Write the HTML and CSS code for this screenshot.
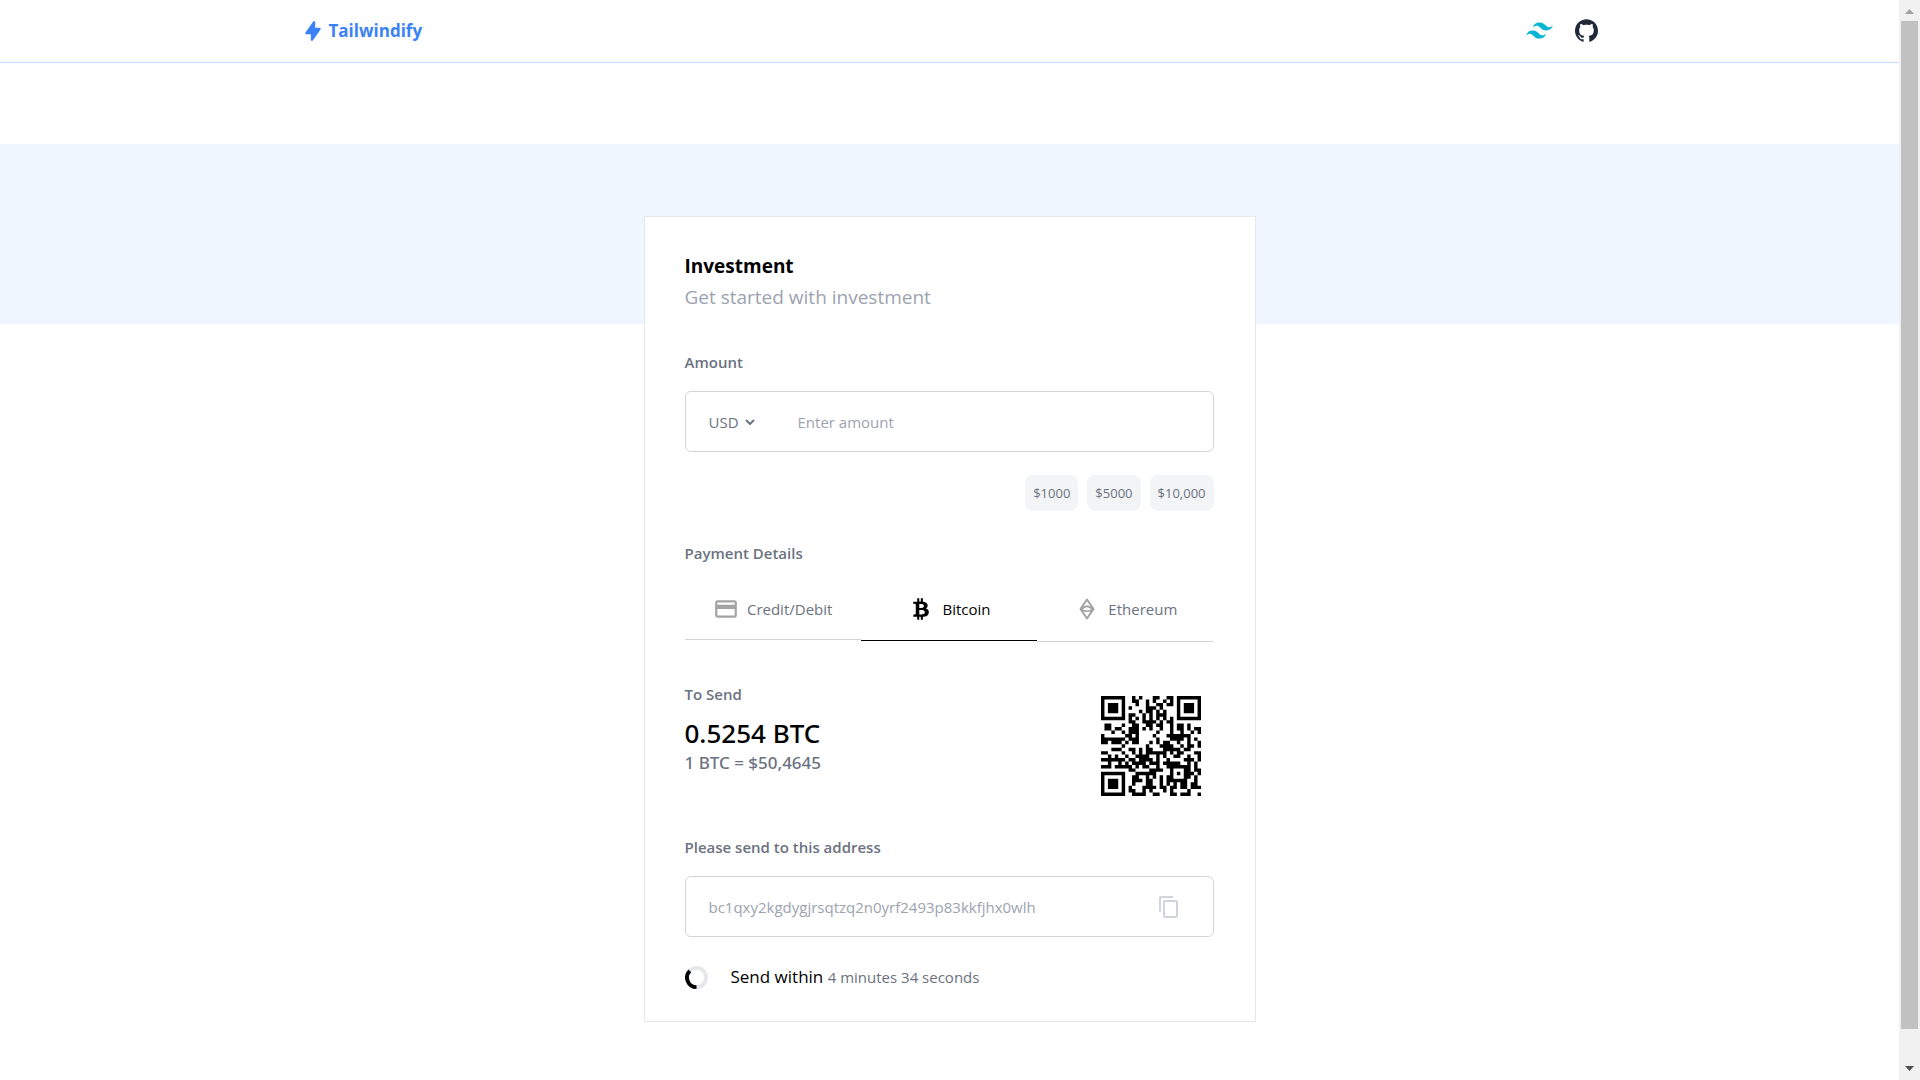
FILE: index.html
```html
<!DOCTYPE html>
<html lang="en">
<head>
<meta charset="utf-8">
<title>Tailwindify</title>
<link rel="stylesheet" href="styles.css">
</head>
<body>
<div class="page">
  <header class="header">
    <nav class="nav">
      <a class="brand" href="#">
        <svg class="brand-icon" viewBox="0 0 20 20" aria-hidden="true"><path fill="currentColor" fill-rule="evenodd" d="M11.3 1.046A1 1 0 0112 2v5h4a1 1 0 01.82 1.573l-7 10A1 1 0 018 18v-5H4a1 1 0 01-.82-1.573l7-10a1 1 0 011.12-.38z"/></svg>
        <span>Tailwindify</span>
      </a>
      <div class="nav-links">
        <a class="tailwind" href="#" aria-label="Tailwind CSS"><svg viewBox="0 0 24 24"><path fill="currentColor" d="M12.001,4.8c-3.2,0-5.2,1.6-6,4.8c1.2-1.6,2.6-2.2,4.2-1.8c0.913,0.228,1.565,0.89,2.288,1.624C13.666,10.618,15.027,12,18.001,12c3.2,0,5.2-1.6,6-4.8c-1.2,1.6-2.6,2.2-4.2,1.8c-0.913-0.228-1.565-0.89-2.288-1.624C16.337,6.182,14.976,4.8,12.001,4.8z M6.001,12c-3.2,0-5.2,1.6-6,4.8c1.2-1.6,2.6-2.2,4.2-1.8c0.913,0.228,1.565,0.89,2.288,1.624c1.177,1.194,2.538,2.576,5.512,2.576c3.2,0,5.2-1.6,6-4.8c-1.2,1.6-2.6,2.2-4.2,1.8c-0.913-0.228-1.565-0.89-2.288-1.624C10.337,13.382,8.976,12,6.001,12z"/></svg></a>
        <a class="github" href="#" aria-label="GitHub"><svg viewBox="0 0 24 24"><path fill="currentColor" d="M12 .297c-6.63 0-12 5.373-12 12 0 5.303 3.438 9.8 8.205 11.385.6.113.82-.258.82-.577 0-.285-.01-1.04-.015-2.04-3.338.724-4.042-1.61-4.042-1.61C4.422 18.07 3.633 17.7 3.633 17.7c-1.087-.744.084-.729.084-.729 1.205.084 1.838 1.236 1.838 1.236 1.07 1.835 2.809 1.305 3.495.998.108-.776.417-1.305.76-1.605-2.665-.3-5.466-1.332-5.466-5.93 0-1.31.465-2.38 1.235-3.22-.135-.303-.54-1.523.105-3.176 0 0 1.005-.322 3.3 1.23.96-.267 1.98-.399 3-.405 1.02.006 2.04.138 3 .405 2.28-1.552 3.285-1.23 3.285-1.23.645 1.653.24 2.873.12 3.176.765.84 1.23 1.91 1.23 3.22 0 4.61-2.805 5.625-5.475 5.92.42.36.81 1.096.81 2.22 0 1.606-.015 2.896-.015 3.286 0 .315.21.69.825.57C20.565 22.092 24 17.592 24 12.297c0-6.627-5.373-12-12-12"/></svg></a>
      </div>
    </nav>
  </header>

  <main>
    <div class="band"></div>
    <form class="card">
      <h1 class="title">Investment</h1>
      <p class="subtitle">Get started with investment</p>

      <label class="label label-amount" for="amount">Amount</label>
      <div class="field">
        <span class="currency">
          <select aria-label="Currency"><option>USD</option><option>EUR</option></select>
          <svg class="chevron" viewBox="0 0 10 6" aria-hidden="true"><path d="M1 1l4 4 4-4" fill="none" stroke="currentColor" stroke-width="2"/></svg>
        </span>
        <input id="amount" type="text" placeholder="Enter amount">
      </div>
      <div class="presets">
        <button type="button">$1000</button>
        <button type="button">$5000</button>
        <button type="button">$10,000</button>
      </div>

      <h2 class="label label-payment">Payment Details</h2>
      <div class="tabs">
        <button type="button" class="tab">
          <svg class="tab-icon-wide" viewBox="0 0 24 24" aria-hidden="true"><path fill="currentColor" d="M20 4H4c-1.110 0-1.990.89-1.990 2L2 18c0 1.110.89 2 2 2h16c1.110 0 2-.89 2-2V6c0-1.110-.89-2-2-2zm0 14H4v-6h16v6zm0-10H4V6h16v2z"/></svg>
          <span>Credit/Debit</span>
        </button>
        <button type="button" class="tab tab-active">
          <svg class="tab-icon" viewBox="0 0 384 512" aria-hidden="true"><path fill="currentColor" d="M310.204 242.638c27.73-14.18 45.377-39.39 41.28-81.3-5.358-57.351-52.458-76.573-114.85-81.929V0h-48.528v77.203c-12.605 0-25.525.315-38.444.63V0h-48.53v79.409c-17.842.539-38.622.276-97.37 0v51.678c38.314-.678 58.417-3.14 63.023 21.427v217.429c-2.925 19.492-18.524 16.685-53.255 16.071L3.765 443.68c88.481 0 97.37.315 97.37.315V512h48.53v-67.06c13.234.315 26.154.315 38.444.315V512h48.528v-68.005c81.299-4.412 135.647-24.894 142.895-101.467 5.671-61.446-23.32-88.862-69.326-99.89zM150.608 134.553c27.415 0 113.126-8.507 113.126 48.528 0 54.515-85.71 48.212-113.126 48.212v-96.74zm0 251.776V279.821c32.772 0 133.127-9.138 133.127 53.255-.001 60.186-100.355 53.253-133.127 53.253z"/></svg>
          <span>Bitcoin</span>
        </button>
        <button type="button" class="tab tab-last">
          <svg class="tab-icon" viewBox="0 0 16 22" aria-hidden="true"><g fill="none" stroke="currentColor" stroke-width="2" stroke-linejoin="round"><path d="M8 1.500L14.500 11 8 20.500 1.500 11z"/><path d="M2 11.500Q8 5 14 11.500"/><path stroke-width="1.500" d="M2 11.500Q8 15 14 11.500"/></g></svg>
          <span>Ethereum</span>
        </button>
      </div>

      <section class="quote">
        <div>
          <h2 class="label">To Send</h2>
          <p class="amount">0.5254 BTC</p>
          <p class="rate">1 BTC = $50,4645</p>
        </div>
        <svg class="qr" id="qr" viewBox="0 0 29 29" role="img" aria-label="Payment QR code"></svg>
      </section>

      <label class="label label-address" for="address">Please send to this address</label>
      <div class="field">
        <input id="address" type="text" readonly value="bc1qxy2kgdygjrsqtzq2n0yrf2493p83kkfjhx0wlh">
        <button class="copy" type="button" aria-label="Copy address"><svg viewBox="0 0 24 24"><path fill="currentColor" d="M16 1H4c-1.100 0-2 .9-2 2v14h2V3h12V1zm3 4H8c-1.100 0-2 .9-2 2v14c0 1.100.9 2 2 2h11c1.100 0 2-.9 2-2V7c0-1.100-.9-2-2-2zm0 16H8V7h11v14z"/></svg></button>
      </div>

      <p class="timer">
        <svg class="spinner" viewBox="0 0 24 24" aria-hidden="true"><g fill="none" stroke-width="4"><circle cx="12" cy="12" r="10" stroke="#e5e7eb"/><path d="M12 22A10 10 0 0 1 5 5" stroke="#000"/></g></svg>
        <span>Send within <span class="remaining">4 minutes 34 seconds</span></span>
      </p>
    </form>
  </main>
</div>
<div class="scrollbar" aria-hidden="true">
  <svg viewBox="0 0 9 5"><path fill="#a3a3a3" d="M0 5l4.500-5L9 5z"/></svg>
  <div class="thumb"></div>
  <svg viewBox="0 0 9 5"><path fill="#505050" d="M0 0l4.500 5L9 0z"/></svg>
</div>
<script src="qr.js"></script>
</body>
</html>
```
FILE: styles.css
```css
* { box-sizing: border-box; }
body {
  margin: 0;
  min-height: 100vh;
  display: flex;
  background: #fff;
  color: #000;
  font-family: "Open Sans", "Noto Sans", sans-serif;
  font-size: 15px;
  line-height: 24px;
}
h1, h2, p { margin: 0; }
button, input, select {
  margin: 0;
  padding: 0;
  border: 0;
  background: none;
  color: inherit;
  font: inherit;
}
svg { display: block; flex: none; }
a { color: inherit; text-decoration: none; }

.page { flex: 1; }

.header { border-bottom: 1px solid #bfdbfe; }
.nav {
  max-width: 1296px;
  height: 62px;
  margin: 0 auto;
  display: flex;
  align-items: center;
  justify-content: space-between;
}
.brand {
  display: flex;
  align-items: center;
  gap: 5px;
  color: #3b82f6;
  font-size: 17px;
  font-weight: 700;
}
.brand-icon { width: 22px; height: 22px; }
.nav-links { padding-bottom: 2px; display: flex; align-items: center; gap: 22px; }
.tailwind { color: #06b6d4; }
.tailwind svg { width: 27px; height: 27px; }
.github { color: #1f2937; }
.github svg { width: 23px; height: 23px; }

.band { height: 180px; margin-top: 81px; background: #eff6ff; }
.card {
  position: relative;
  max-width: 612px;
  margin: -108px auto 58px;
  padding: 35px 41px 32px 40px;
  border: 1px solid #e5e7eb;
  background: #fff;
}
.title { margin-bottom: 1px; font-size: 19px; line-height: 28px; font-weight: 700; }
.subtitle { font-size: 19px; line-height: 32px; color: #9ca3af; }

.label {
  display: block;
  color: #6b7280;
  font-size: 15px;
  line-height: 24px;
  font-weight: 600;
}
.label-amount { margin-top: 37px; }
.label-payment { margin-top: 30px; }
.label-address { margin-top: 39px; }

.field {
  height: 61px;
  margin-top: 17px;
  padding: 0 23px;
  display: flex;
  align-items: center;
  border: 1px solid #d1d5db;
  border-radius: 6px;
  color: #9ca3af;
}
.field input { flex: 1; min-width: 0; height: 100%; outline: 0; }
.field input::placeholder { color: #9ca3af; opacity: 1; }
.currency {
  width: 89px;
  display: flex;
  align-items: center;
  gap: 4px;
  color: #6b7280;
}
.currency select { width: 32px; appearance: none; }
.chevron { width: 10px; height: 6px; }
.copy { padding: 0 9px; color: #d1d5db; }
.copy svg { width: 24px; height: 24px; }

.presets {
  margin-top: 23px;
  display: flex;
  justify-content: flex-end;
  gap: 9px;
}
.presets button {
  height: 36px;
  padding: 0 8px;
  border-radius: 8px;
  background: #f3f4f6;
  color: #6b7280;
  font-size: 13px;
}

.tabs {
  margin-top: 14px;
  display: grid;
  grid-template-columns: repeat(3, 1fr);
  align-items: start;
}
.tab {
  height: 61px;
  display: flex;
  align-items: center;
  justify-content: center;
  gap: 8px;
  border-bottom: 1px solid #d1d5db;
  color: #6b7280;
}
.tab svg { color: #a3a3a3; }
.tab-icon-wide { width: 26px; height: 26px; }
.tab-icon { width: 16px; height: 22px; margin: 0 5px 0 6px; }
.tab-active { height: 62px; padding-bottom: 1px; border-color: #000; color: #000; }
.tab-active svg { color: #000; }
.tab-last { height: 63px; padding-bottom: 2px; }

.quote {
  margin-top: 40px;
  padding-right: 13px;
  display: flex;
  justify-content: space-between;
}
.amount, .rate { font-family: "Noto Sans", "Open Sans", sans-serif; font-weight: 500; }
.amount { margin-top: 9px; font-size: 26px; line-height: 36px; }
.rate { color: #6b7280; font-size: 17px; line-height: 24px; }
.qr { width: 100px; height: 100px; margin-top: 14px; }

.timer {
  margin-top: 28px;
  display: flex;
  align-items: center;
  gap: 23px;
  font-size: 17px;
}
.spinner { width: 23px; height: 23px; }
.remaining { color: #6b7280; font-size: 15px; }

.scrollbar {
  position: sticky;
  top: 0;
  width: 21px;
  height: 100vh;
  padding: 9px 2px;
  display: flex;
  flex-direction: column;
  align-items: center;
  gap: 7px;
  background: #f1f1f1;
}
.scrollbar svg { width: 9px; height: 5px; }
.thumb { flex: 1; width: 100%; margin-bottom: 30px; background: #c1c1c1; }
```
FILE: qr.js
```js
// Version 3, level Q, mask 1 QR code: two interleaved blocks of 17 data + 18 check bytes.
(function () {
  var text = 'http://en.m.wikipedia.org', size = 29;
  var bits = '0100' + byteBits(text.length);
  for (var c of text) bits += byteBits(c.charCodeAt(0));
  bits += '0000';
  var data = bits.match(/.{8}/g).map(function (b) { return parseInt(b, 2); });
  for (var pad = 0xEC; data.length < 34; pad ^= 0xFD) data.push(pad);

  function byteBits(n) { return n.toString(2).padStart(8, '0'); }
  function mul(a, b) {
    var r = 0;
    for (; b; b >>= 1) {
      if (b & 1) r ^= a;
      a <<= 1;
      if (a & 256) a ^= 0x11D;
    }
    return r;
  }
  var gen = [1], root = 1;
  for (var i = 0; i < 18; i++) {
    var next = gen.concat(0);
    gen.forEach(function (g, k) { next[k + 1] ^= mul(g, root); });
    gen = next;
    root = mul(root, 2);
  }
  function check(block) {
    var rem = block.concat(new Array(18).fill(0));
    for (var i = 0; i < block.length; i++) {
      var f = rem[i];
      for (var k = 0; k < gen.length; k++) rem[i + k] ^= mul(gen[k], f);
    }
    return rem.slice(block.length);
  }
  var a = data.slice(0, 17), b = data.slice(17), ea = check(a), eb = check(b), stream = '';
  a.forEach(function (v, i) { stream += byteBits(v) + byteBits(b[i]); });
  ea.forEach(function (v, i) { stream += byteBits(v) + byteBits(eb[i]); });

  var m = Array.from({ length: size }, function () { return new Array(size).fill(null); });
  function square(r, c, reach, dark) {
    for (var y = -reach; y <= reach; y++) for (var x = -reach; x <= reach; x++) {
      if (m[r + y] && m[r + y][c + x] !== undefined) m[r + y][c + x] = dark(Math.max(Math.abs(x), Math.abs(y)));
    }
  }
  [[3, 3], [3, 25], [25, 3]].forEach(function (p) {
    square(p[0], p[1], 4, function (d) { return d !== 2 && d !== 4; });
  });
  square(22, 22, 2, function (d) { return d !== 1; });
  for (i = 8; i < 21; i++) m[6][i] = m[i][6] = i % 2 === 0;
  m[21][8] = true;
  var format = '011000001101000';
  for (i = 0; i < 15; i++) {
    var on = format[i] === '1';
    if (i < 8) m[8][i < 6 ? i : i + 1] = on;
    else m[i === 8 ? 7 : 14 - i][8] = on;
    if (i < 7) m[28 - i][8] = on;
    else m[8][14 + i] = on;
  }

  var n = 0, up = true;
  for (var col = 28; col > 0; col -= 2) {
    if (col === 6) col = 5;
    for (var s = 0; s < size; s++) {
      var row = up ? 28 - s : s;
      for (var k = 0; k < 2; k++) {
        if (m[row][col - k] === null) {
          m[row][col - k] = (stream[n++] === '1') !== (row % 2 === 0);
        }
      }
    }
    up = !up;
  }

  var d = '';
  m.forEach(function (line, y) {
    line.forEach(function (dark, x) { if (dark) d += 'M' + x + ' ' + y + 'h1v1h-1z'; });
  });
  var path = document.createElementNS('http://www.w3.org/2000/svg', 'path');
  path.setAttribute('d', d);
  document.getElementById('qr').appendChild(path);
})();
```
